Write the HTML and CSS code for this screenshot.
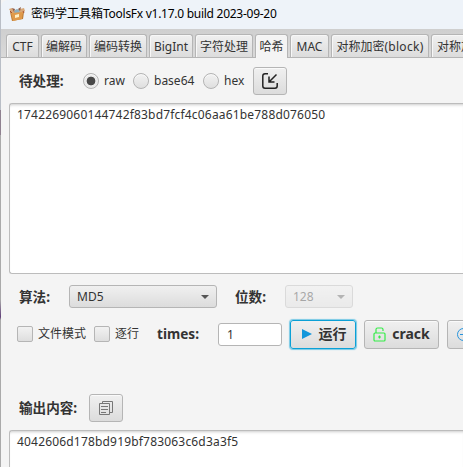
FILE: index.html
```html
<!DOCTYPE html>
<html lang="zh">
<head>
<meta charset="utf-8">
<title>密码学工具箱ToolsFx</title>
<link rel="stylesheet" href="styles.css">
</head>
<body>
<div class="edge"></div>
<main class="window">
  <header class="titlebar">
    <svg class="logo" width="16" height="16" viewBox="0 0 16 16">
      <path d="M1 6L12 3l3 3-1 7-11 2z" fill="#b97932"/>
      <path d="M0 3l3-1 3 4 5-3 4-1 1 3-3 3H3z" fill="#d9a878"/>
      <path d="M3 2l3 1-1 3zM9 3l3-2-1 4z" fill="#8d5a44"/>
      <path d="M6 4l2-1 2 1 1 3H5z" fill="#8baec0"/>
      <path d="M2 7l12-1-1 7-9 2z" fill="#e09a4a"/>
      <path d="M6 9l4-1v3l-4 1z" fill="#fff0c5"/>
      <path d="M1 5l2 2M14 5l1 2" stroke="#a94d2d"/>
    </svg>
    <span class="title">密码学工具箱<span class="latin">ToolsFx v1.17.0 build 2023-09-20</span></span>
  </header>
  <nav class="tabs">
    <div class="tab ctf">CTF</div><div class="tab w3">编解码</div><div class="tab w4">编码转换</div><div class="tab big">BigInt</div><div class="tab w4">字符处理</div><div class="tab active">哈希</div><div class="tab mac">MAC</div><div class="tab block">对称加密<span>(block)</span></div><div class="tab stream">对称加密<span>(stream)</span></div>
  </nav>
  <section class="content">
    <div class="row input-row">
      <b class="label pending">待处理:</b>
      <span class="radio on"></span><span class="option raw">raw</span>
      <span class="radio"></span><span class="option base">base64</span>
      <span class="radio"></span><span class="option hex">hex</span>
      <span class="button icon-button"><svg width="18" height="18" viewBox="0 0 18 18" fill="none" stroke="#222" stroke-width="1.5"><path d="M7 1.8H4Q1.800 1.800 1.800 4v10Q1.800 16.200 4 16.200h10q2.200 0 2.200-2.200v-3M15.500 2.500L8 10M8 4.500V10h5.500"/></svg></span>
    </div>
    <div class="area input-area">1742269060144742f83bd7fcf4c06aa61be788d076050</div>
    <div class="row algorithm-row">
      <b class="label algorithm">算法:</b>
      <span class="select md"><span>MD5</span><i></i></span>
      <b class="label bits">位数:</b>
      <span class="select disabled"><span>128</span><i></i></span>
    </div>
    <div class="row action-row">
      <span class="check"></span><span class="option file">文件模式</span>
      <span class="check"></span><span class="option line">逐行</span>
      <b class="label times">times:</b>
      <span class="number">1</span>
      <span class="button run"><svg width="10" height="12" viewBox="0 0 10 12"><path d="M0 1l10 5-10 5z" fill="#1296db"/></svg><b>运行</b></span>
      <span class="button crack"><svg width="13" height="15" viewBox="0 0 13 15" fill="none" stroke="#35ed48" stroke-width="1.200"><rect x="1" y="6" width="11" height="8" rx="1"/><path d="M3 6V2.500Q3 1 4.500 1h4Q10 1 10 2.500V4M5 10h3M6.500 8.500v3"/></svg><b>crack</b></span>
      <span class="button more"><svg width="15" height="15" viewBox="0 0 15 15" fill="none" stroke="#2794dc" stroke-width="1"><circle cx="7.500" cy="7.500" r="6"/><path d="M4 7.500h7"/></svg></span>
    </div>
    <div class="row output-row">
      <b class="label output">输出内容:</b>
      <span class="button icon-button"><svg width="16" height="16" viewBox="0 0 16 16" fill="none" stroke="#777" stroke-width="1"><path d="M4.500 3V1.500h10v11H12M1.500 3.500h10v11h-10zM3 6.500h7M3 9.500h7M3 12.500h5"/></svg></span>
    </div>
    <div class="area output-area">4042606d178bd919bf783063c6d3a3f5</div>
  </section>
</main>
</body>
</html>
```
FILE: styles.css
```css
* { box-sizing: border-box; }
body { margin: 0; width: 463px; height: 467px; overflow: hidden; display: flex; background: #f4f4f4; color: #333; font: 12px/18px "Noto Sans", "Noto Sans CJK SC", sans-serif; white-space: nowrap; }
.edge { width: 1px; flex: none; background: linear-gradient(#b9bec6 0 110px, #8f8190 110px 135px, #aaa 135px 300px, #62417a 317px, #aaa 320px); }
.window { width: 462px; flex: none; overflow: hidden; border-top-left-radius: 7px; }
.titlebar { height: 29px; display: flex; align-items: center; padding: 0 0 2px 8px; background: #eef3f9; color: #000; }
.logo { margin-right: 6px; }
.title { font-size: 12px; }
.latin { letter-spacing: -.27px; }
.tabs { height: 29px; display: flex; align-items: flex-end; gap: 2px; padding-left: 5px; background: linear-gradient(#cfcfcf, #d9d9d9); border-bottom: 1px solid #b5b5b5; }
.tab { flex: none; height: 23px; padding: 3px 0 0; border: 1px solid #b5b5b5; border-bottom: 0; border-radius: 3px 3px 0 0; background: linear-gradient(#f0f0f0, #dcdcdc); box-shadow: inset 1px 1px #f7f7f7; text-align: center; }
.ctf { width: 33px; }
.w3 { width: 46px; }
.w4 { width: 58px; }
.big { width: 44px; }
.active { width: 33px; height: 24px; margin-bottom: -1px; background: #f4f4f4; }
.mac { width: 39px; }
.block { width: 98px; }
.block span { letter-spacing: .3px; }
.stream { width: 110px; padding-left: 5px; text-align: left; }
.content { padding-left: 8px; }
.row { display: flex; align-items: center; }
.input-row { height: 45px; padding: 1px 0 0 10px; }
.label { flex: none; font-size: 13.6px; }
.pending { width: 64px; }
.radio { width: 16px; height: 16px; flex: none; border: 1px solid #b3b3b3; border-radius: 50%; background: linear-gradient(#f2f2f2, #dfdfdf); box-shadow: inset 0 1px #fafafa; }
.radio.on { background: radial-gradient(circle, #484848 0 4px, #eaeaea 4.7px); }
.option { flex: none; margin-left: 5px; font-size: 12px; }
.raw { width: 29px; }
.base { width: 49px; }
.hex { width: 29px; }
.button { flex: none; display: flex; align-items: center; justify-content: center; border: 1px solid #b5b5b5; border-radius: 3px; background: linear-gradient(#f0f0f0, #dcdcdc); box-shadow: inset 0 1px #fafafa; }
.icon-button { width: 34px; height: 28px; }
.area { border: 1px solid #bcbcbc; border-right: 0; border-radius: 3px 0 0 3px; background: #fff; box-shadow: inset 0 3px 3px -2px #ccc; padding: 2px 7px; letter-spacing: .18px; }
.input-area { height: 171px; }
.algorithm-row { height: 45px; padding-left: 10px; }
.algorithm { width: 50px; }
.select { height: 23px; display: flex; align-items: center; justify-content: space-between; padding: 0 7px; border: 1px solid #b5b5b5; border-radius: 3px; background: linear-gradient(#f0f0f0, #dcdcdc); }
.select i { border: 4px solid transparent; border-top-color: #555; border-bottom: 0; }
.md { width: 148px; }
.bits { width: 50px; margin-left: 18px; }
.disabled { width: 68px; opacity: .4; }
.action-row { height: 30px; padding-left: 8px; }
.check { width: 16px; height: 16px; flex: none; border: 1px solid #b5b5b5; border-radius: 2px; background: linear-gradient(#f2f2f2, #dedede); }
.file { width: 56px; }
.line { width: 42px; }
.times { width: 61px; }
.number { width: 64px; height: 23px; flex: none; padding: 2px 8px; border: 1px solid #b5b5b5; border-radius: 3px; background: #fff; }
.run { width: 66px; height: 29px; margin-left: 8px; gap: 7px; padding-left: 2px; border: 1px solid #0ba0d6; box-shadow: 0 0 1px 1px #78c9e5; }
.crack { width: 75px; height: 29px; margin-left: 8px; gap: 6px; }
.button b { font-size: 14px; }
.more { width: 60px; height: 29px; margin-left: 8px; justify-content: flex-start; padding-left: 8px; }
.output-row { height: 81px; padding: 36px 0 0 10px; }
.output { width: 70px; }
.output-area { height: 50px; }
```
